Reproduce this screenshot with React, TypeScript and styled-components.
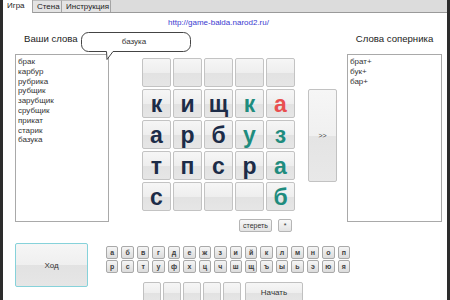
import React from "react";
import styled, { createGlobalStyle } from "styled-components";

const Global = createGlobalStyle`
  html, body { margin: 0; padding: 0; width: 450px; height: 300px; overflow: hidden; background: #fff; }
  body { font-family: "Liberation Sans", Arial, sans-serif; }
`;

const Window = styled.div`
  width: 450px;
  height: 300px;
  box-sizing: border-box;
  border-left: 3px solid #2c2c2c;
  border-right: 3px solid #2c2c2c;
  background: #fff;
  display: flex;
  flex-direction: column;
  overflow: hidden;
`;

const TabBar = styled.div`
  height: 12px;
  flex: none;
  background: #dcdcdc;
  border-bottom: 1px solid #9a9a9a;
  display: flex;
  align-items: flex-start;
`;

const Tab = styled.div<{ $active?: boolean; $w: number }>`
  width: ${(p) => p.$w}px;
  height: ${(p) => (p.$active ? 13 : 12)}px;
  box-sizing: border-box;
  padding-left: 4px;
  font-size: 8px;
  line-height: 11px;
  color: #222;
  background: ${(p) => (p.$active ? "#fff" : "#e4e4e4")};
  border-right: 1px solid #a4a4a4;
  border-top: ${(p) => (p.$active ? "none" : "1px solid #bdbdbd")};
  position: relative;
  z-index: 1;
`;

const Content = styled.div`
  flex: 1;
  display: flex;
  flex-direction: column;
`;

const UrlRow = styled.div`
  margin-top: 5px;
  padding-left: 165px;
  font-size: 8px;
  line-height: 10px;
  height: 10px;
  color: #3a3ad0;
`;

const MainGrid = styled.div`
  margin: 5px 5px 0 12px;
  display: grid;
  grid-template-columns: 94px 186px 42px 105px;
  align-items: start;
`;

const SideColumn = styled.div`
  display: flex;
  flex-direction: column;
`;

const Heading = styled.div<{ $center?: boolean }>`
  position: relative;
  height: 12px;
  font-size: 9.6px;
  line-height: 12px;
  color: #222;
  padding-left: ${(p) => (p.$center ? 0 : 9)}px;
  text-align: ${(p) => (p.$center ? "center" : "left")};
  margin-bottom: 9px;
  white-space: nowrap;
`;

const ListBox = styled.div`
  height: 168px;
  box-sizing: border-box;
  border: 1px solid #a9a9a9;
  background: #fff;
  padding: 2px 2px;
  font-size: 8px;
  line-height: 9.8px;
  color: #333;
`;

const Bubble = styled.div`
  position: absolute;
  left: 66px;
  top: -1px;
  width: 110px;
  height: 28px;
`;

const BubbleText = styled.div`
  position: absolute;
  left: 0;
  top: 0;
  width: 106px;
  height: 20px;
  font-size: 8px;
  line-height: 20px;
  text-align: center;
  color: #333;
`;

const BoardColumn = styled.div`
  margin-left: 33px;
  padding-top: 25px;
  display: flex;
  flex-direction: column;
  width: 153px;
`;

const Board = styled.div`
  display: grid;
  grid-template-columns: repeat(5, 29px);
  grid-auto-rows: 29px;
  gap: 2px;
`;

const Cell = styled.div<{ $tone?: "dark" | "teal" | "red" }>`
  box-sizing: border-box;
  border: 1px solid #c3c3c3;
  border-radius: 2px;
  background: linear-gradient(#f6f6f6 0%, #eeeeee 50%, #e2e2e2 51%, #e6e6e6 100%);
  display: flex;
  align-items: center;
  justify-content: center;
  font-weight: bold;
  font-size: 23px;
  line-height: 27px;
  padding-top: 2px;
  color: ${(p) => (p.$tone === "teal" ? "#1f8c7e" : p.$tone === "red" ? "#e94f50" : "#1c2c48")};
`;

const EditRow = styled.div`
  margin-top: 8px;
  padding-right: 3px;
  display: flex;
  justify-content: flex-end;
  gap: 6px;
`;

const SmallButton = styled.div<{ $w: number }>`
  width: ${(p) => p.$w}px;
  height: 13px;
  box-sizing: border-box;
  border: 1px solid #b5b5b5;
  border-radius: 2px;
  background: linear-gradient(#f8f8f8, #e3e3e3);
  font-size: 7px;
  line-height: 11px;
  text-align: center;
  color: #333;
`;

const MoveColumn = styled.div`
  margin-left: 13px;
  padding-top: 56px;
`;

const ArrowButton = styled.div`
  width: 29px;
  height: 93px;
  box-sizing: border-box;
  border: 1px solid #c2c2c2;
  border-radius: 2px;
  background: linear-gradient(#f6f6f6 0%, #f0f0f0 50%, #e4e4e4 51%, #e8e8e8 100%);
  display: flex;
  align-items: center;
  justify-content: center;
  font-size: 7px;
  color: #444;
`;

const RightColumn = styled(SideColumn)`
  margin-left: 10px;
`;

const BottomSection = styled.div`
  margin: 11px 0 0 12px;
  display: flex;
  align-items: flex-start;
`;

const TurnButton = styled.div`
  width: 73px;
  height: 44px;
  box-sizing: border-box;
  border: 1px solid #86d2da;
  border-radius: 2px;
  background: linear-gradient(#f6f6f6 0%, #efefef 50%, #e2e2e2 51%, #e6e6e6 100%);
  display: flex;
  align-items: center;
  justify-content: center;
  font-size: 8px;
  color: #333;
`;

const KeyboardColumn = styled.div`
  margin-left: 18px;
  padding-top: 3px;
  display: flex;
  flex-direction: column;
`;

const Keyboard = styled.div`
  width: 244px;
  display: grid;
  grid-template-columns: repeat(16, 1fr);
  grid-auto-rows: 13px;
  column-gap: 3px;
  row-gap: 1px;
`;

const Key = styled.div`
  box-sizing: border-box;
  border: 1px solid #a9a9a9;
  border-radius: 2px;
  background: linear-gradient(#f5f5f5, #dcdcdc);
  font-size: 7px;
  font-weight: bold;
  line-height: 11px;
  text-align: center;
  color: #3e3e3e;
`;

const SlotRow = styled.div`
  margin: 9px 0 0 37px;
  display: flex;
  gap: 2px;
`;

const Slot = styled.div<{ $w?: number }>`
  width: ${(p) => p.$w ?? 18}px;
  height: 22px;
  box-sizing: border-box;
  border: 1px solid #c0c0c0;
  border-radius: 2px;
  background: linear-gradient(#f6f6f6 0%, #eeeeee 50%, #e2e2e2 51%, #e6e6e6 100%);
  font-size: 8px;
  line-height: 20px;
  text-align: center;
  color: #333;
`;

const StartSlot = styled(Slot)`
  margin-left: 2px;
`;

type Tone = "dark" | "teal" | "red";
const board: [string, Tone][][] = [
  [["", "dark"], ["", "dark"], ["", "dark"], ["", "dark"], ["", "dark"]],
  [["к", "dark"], ["и", "dark"], ["щ", "dark"], ["к", "teal"], ["а", "red"]],
  [["а", "dark"], ["р", "dark"], ["б", "dark"], ["у", "teal"], ["з", "teal"]],
  [["т", "dark"], ["п", "dark"], ["с", "dark"], ["р", "dark"], ["а", "teal"]],
  [["с", "dark"], ["", "dark"], ["", "dark"], ["", "dark"], ["б", "teal"]],
];

const myWords = ["брак", "карбур", "рубрика", "рубщик", "зарубщик", "срубщик", "прикат", "старик", "базука"];
const rivalWords = ["брат+", "бук+", "бар+"];
const letters = "абвгдежзийклмнопрстуфхцчшщъыьэюя".split("");

export default function App() {
  return (
    <>
      <Global />
      <Window>
        <TabBar>
          <Tab $active $w={30}>Игра</Tab>
          <Tab $w={29}>Стена</Tab>
          <Tab $w={49}>Инструкция</Tab>
        </TabBar>
        <Content>
          <UrlRow>http://game-balda.narod2.ru/</UrlRow>
          <MainGrid>
            <SideColumn>
              <Heading>
                Ваши слова
                <Bubble>
                  <svg width="110" height="28" viewBox="0 0 110 28">
                    <path
                      d="M7.5 0.5 H102.5 A7 7 0 0 1 109.5 7.5 V12.5 A7 7 0 0 1 102.5 19.5 H32 L26 27.5 L25.5 19.5 H7.5 A7 7 0 0 1 0.5 12.5 V7.5 A7 7 0 0 1 7.5 0.5 Z"
                      fill="#fff"
                      stroke="#444"
                      strokeWidth="1"
                    />
                  </svg>
                  <BubbleText>базука</BubbleText>
                </Bubble>
              </Heading>
              <ListBox>
                {myWords.map((w) => (
                  <div key={w}>{w}</div>
                ))}
              </ListBox>
            </SideColumn>
            <BoardColumn>
              <Board>
                {board.flat().map(([ch, tone], i) => (
                  <Cell key={i} $tone={tone}>
                    {ch}
                  </Cell>
                ))}
              </Board>
              <EditRow>
                <SmallButton $w={33}>стереть</SmallButton>
                <SmallButton $w={14}>*</SmallButton>
              </EditRow>
            </BoardColumn>
            <MoveColumn>
              <ArrowButton>&gt;&gt;</ArrowButton>
            </MoveColumn>
            <RightColumn>
              <Heading $center>Слова соперника</Heading>
              <ListBox>
                {rivalWords.map((w) => (
                  <div key={w}>{w}</div>
                ))}
              </ListBox>
            </RightColumn>
          </MainGrid>
          <BottomSection>
            <TurnButton>Ход</TurnButton>
            <KeyboardColumn>
              <Keyboard>
                {letters.map((l) => (
                  <Key key={l}>{l}</Key>
                ))}
              </Keyboard>
              <SlotRow>
                <Slot />
                <Slot />
                <Slot />
                <Slot />
                <Slot />
                <StartSlot $w={58}>Начать</StartSlot>
              </SlotRow>
            </KeyboardColumn>
          </BottomSection>
        </Content>
      </Window>
    </>
  );
}
